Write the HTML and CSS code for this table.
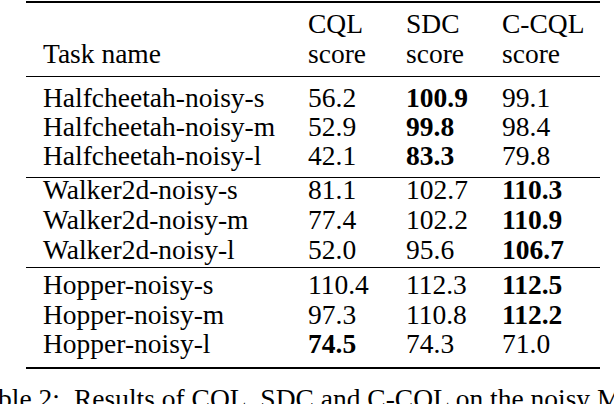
FILE: index.html
```html
<!DOCTYPE html>
<html>
<head>
<meta charset="utf-8">
<link rel="stylesheet" href="styles.css">
</head>
<body>
<div class="table">
  <div class="head row">
    <div class="cell task">Task name</div>
    <div class="cell">CQL<br>score</div>
    <div class="cell">SDC<br>score</div>
    <div class="cell">C-CQL<br>score</div>
  </div>
  <div class="group g1">
    <div class="row"><div class="cell">Halfcheetah-noisy-s</div><div class="cell">56.2</div><div class="cell"><b>100.9</b></div><div class="cell">99.1</div></div>
    <div class="row"><div class="cell">Halfcheetah-noisy-m</div><div class="cell">52.9</div><div class="cell"><b>99.8</b></div><div class="cell">98.4</div></div>
    <div class="row"><div class="cell">Halfcheetah-noisy-l</div><div class="cell">42.1</div><div class="cell"><b>83.3</b></div><div class="cell">79.8</div></div>
  </div>
  <div class="group g2">
    <div class="row"><div class="cell">Walker2d-noisy-s</div><div class="cell">81.1</div><div class="cell">102.7</div><div class="cell"><b>110.3</b></div></div>
    <div class="row"><div class="cell">Walker2d-noisy-m</div><div class="cell">77.4</div><div class="cell">102.2</div><div class="cell"><b>110.9</b></div></div>
    <div class="row"><div class="cell">Walker2d-noisy-l</div><div class="cell">52.0</div><div class="cell">95.6</div><div class="cell"><b>106.7</b></div></div>
  </div>
  <div class="group g3">
    <div class="row"><div class="cell">Hopper-noisy-s</div><div class="cell">110.4</div><div class="cell">112.3</div><div class="cell"><b>112.5</b></div></div>
    <div class="row"><div class="cell">Hopper-noisy-m</div><div class="cell">97.3</div><div class="cell">110.8</div><div class="cell"><b>112.2</b></div></div>
    <div class="row"><div class="cell">Hopper-noisy-l</div><div class="cell"><b>74.5</b></div><div class="cell">74.3</div><div class="cell">71.0</div></div>
  </div>
</div>
<div class="caption-wrap"><p class="caption">Table 2:<span class="gap"></span>Results of CQL, SDC and C-CQL on the noisy Mujoco tasks.</p></div>
</body>
</html>
```

FILE: styles.css
```css
html, body {
  margin: 0;
  padding: 0;
  background: #fff;
}
body {
  font-family: "Liberation Serif", "Times New Roman", serif;
  font-size: 27.5px;
  color: #000;
  overflow: hidden;
  width: 614px;
  height: 404px;
  padding-top: 1px;
}
.table {
  margin-left: 26px;
  width: 574px;
  border-top: 2px solid #000;
  border-bottom: 2px solid #000;
}
.row {
  display: grid;
  grid-template-columns: 265px 98px 96px 115px;
  line-height: 21px;
}
.cell {
  padding-left: 17px;
  white-space: nowrap;
}
.head {
  line-height: 30px;
  padding: 6px 0 7px;
  border-bottom: 1px solid #000;
}
.head .task {
  align-self: end;
}
.group {
  display: grid;
}
.g1 {
  padding: 10px 0 11px;
  row-gap: 8px;
  border-bottom: 1px solid #000;
}
.g2 {
  padding: 1px 0 7px;
  row-gap: 9px;
  border-bottom: 1px solid #000;
}
.g3 {
  padding: 6px 0 13px;
  row-gap: 8.5px;
}
b {
  font-weight: bold;
}
.caption-wrap {
  width: 614px;
  overflow: hidden;
}
.caption {
  margin: 15px 0 0;
  line-height: 30px;
  white-space: nowrap;
  text-indent: -29px;
  word-spacing: 0;
}
.gap {
  display: inline-block;
  width: 14px;
}
```
